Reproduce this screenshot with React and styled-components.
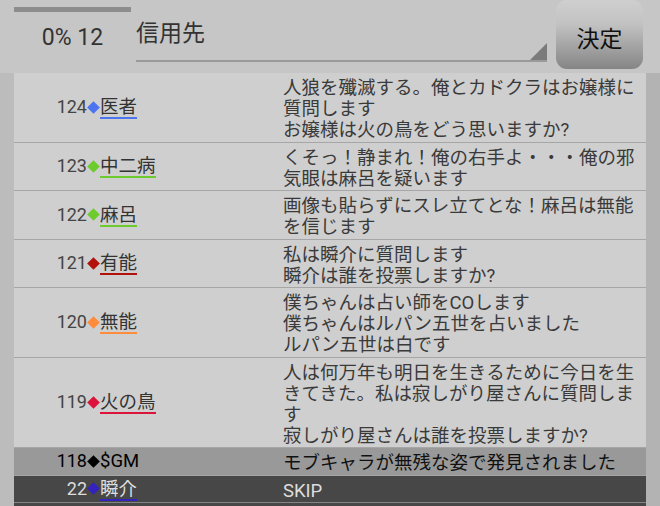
import React from "react";
import styled, { createGlobalStyle } from "styled-components";

const GlobalStyle = createGlobalStyle`
    html, body {
        margin: 0;
        padding: 0;
        height: 506px;
        overflow: hidden;
        background: #c6c6c6;
        font-family: Roboto, "Noto Sans CJK JP", sans-serif;
    }
`;

const logs = [
    { no: 124, name: "医者", color: "#4d74f0", text: "人狼を殲滅する。俺とカドクラはお嬢様に質問します\nお嬢様は火の鳥をどう思いますか?" },
    { no: 123, name: "中二病", color: "#6ecb2e", text: "くそっ！静まれ！俺の右手よ・・・俺の邪気眼は麻呂を疑います" },
    { no: 122, name: "麻呂", color: "#6ecb2e", text: "画像も貼らずにスレ立てとな！麻呂は無能を信じます" },
    { no: 121, name: "有能", color: "#b3120c", text: "私は瞬介に質問します\n瞬介は誰を投票しますか?" },
    { no: 120, name: "無能", color: "#ff8c3c", text: "僕ちゃんは占い師をCOします\n僕ちゃんはルパン五世を占いました\nルパン五世は白です" },
    { no: 119, name: "火の鳥", color: "#dc143c", text: "人は何万年も明日を生きるために今日を生きてきた。私は寂しがり屋さんに質問します\n寂しがり屋さんは誰を投票しますか?" },
    { no: 118, name: "$GM", color: "#000", text: "モブキャラが無残な姿で発見されました", tone: "gm" },
    { no: 22, name: "瞬介", color: "#3322bb", text: "SKIP", tone: "skip" },
];

function App() {
    const renderLogs = () => {
        return logs.map((log) => {
            return (
                <Row key={log.no} $tone={log.tone}>
                    <Speaker>
                        <Number $tone={log.tone}>{log.no}</Number>
                        <Diamond $color={log.color} />
                        <Name $color={log.color} $tone={log.tone}>
                            {log.name}
                        </Name>
                    </Speaker>
                    <Message $tone={log.tone}>{log.text}</Message>
                </Row>
            );
        });
    };
    return (
        <>
            <GlobalStyle />
            <Header>
                <Counter>
                    <Progress />
                    <Count>0% 12</Count>
                </Counter>
                <Field>
                    <FieldText>信用先</FieldText>
                    <Corner />
                </Field>
                <Decide>決定</Decide>
            </Header>
            <Board>{renderLogs()}</Board>
        </>
    );
}

const Header = styled.header`
    display: flex;
    height: 73px;
    background: #c6c6c6;
`;
const Counter = styled.div`
    width: 117px;
    margin-left: 14px;
    flex-shrink: 0;
    display: flex;
    flex-direction: column;
    align-items: center;
`;
const Progress = styled.div`
    width: 100%;
    height: 5px;
    margin-top: 7px;
    background: #8d8d8d;
`;
const Count = styled.div`
    margin-top: 13px;
    font-size: 23px;
    line-height: 26px;
    color: #333;
`;
const Field = styled.div`
    flex: 1;
    display: flex;
    align-items: flex-end;
    height: 60px;
    margin-left: 5px;
    border-bottom: 2px solid #9a9a9a;
`;
const FieldText = styled.div`
    flex: 1;
    align-self: flex-start;
    padding-top: 19px;
    font-size: 23px;
    line-height: 30px;
    color: #333;
`;
const Corner = styled.div`
    width: 0;
    height: 0;
    border-left: 17px solid transparent;
    border-bottom: 17px solid #7b7b7b;
`;
const Decide = styled.button`
    width: 87px;
    height: 69px;
    margin: 0 17px 0 9px;
    padding: 4px 0 0;
    border: none;
    border-radius: 11px;
    background: linear-gradient(#cfcfcf, #c2c2c2 35%, #858585);
    font-family: Roboto, "Noto Sans CJK JP", sans-serif;
    font-size: 23px;
    color: #111;
`;
const Board = styled.div`
    height: 433px;
    overflow: hidden;
    border-left: 14px solid #bcbcbc;
    border-right: 14px solid #b3b3b3;
    background: #474747;
`;
const Row = styled.div`
    display: grid;
    grid-template-columns: 269px 1fr;
    background: ${(p) =>
        p.$tone === "gm" ? "#999999" : p.$tone === "skip" ? "#474747" : "#cfcfcf"};
    border-bottom: 1px solid ${(p) => (p.$tone === "skip" ? "#858585" : "#a6a6a6")};
`;
const Speaker = styled.div`
    display: flex;
    align-items: center;
`;
const Number = styled.span`
    width: 73px;
    text-align: right;
    font-size: 18px;
    line-height: 20px;
    color: ${(p) => (p.$tone === "gm" ? "#000" : p.$tone === "skip" ? "#ddd" : "#444")};
`;
const Diamond = styled.span`
    width: 9px;
    height: 9px;
    margin: 0 2px;
    background: ${(p) => p.$color};
    transform: rotate(45deg);
`;
const Name = styled.span`
    font-size: 18.5px;
    line-height: 20px;
    padding-top: 2px;
    color: ${(p) => (p.$tone === "gm" ? "#000" : p.$tone === "skip" ? "#ddd" : "#333")};
    border-bottom: 2px solid ${(p) => (p.$tone === "gm" ? "transparent" : p.$color)};
`;
const Message = styled.div`
    padding: 5px 0 0.5px;
    font-size: 18.5px;
    line-height: 21px;
    white-space: pre-wrap;
    color: ${(p) => (p.$tone === "gm" ? "#111" : p.$tone === "skip" ? "#ddd" : "#3a3a3a")};
`;

export default App;
